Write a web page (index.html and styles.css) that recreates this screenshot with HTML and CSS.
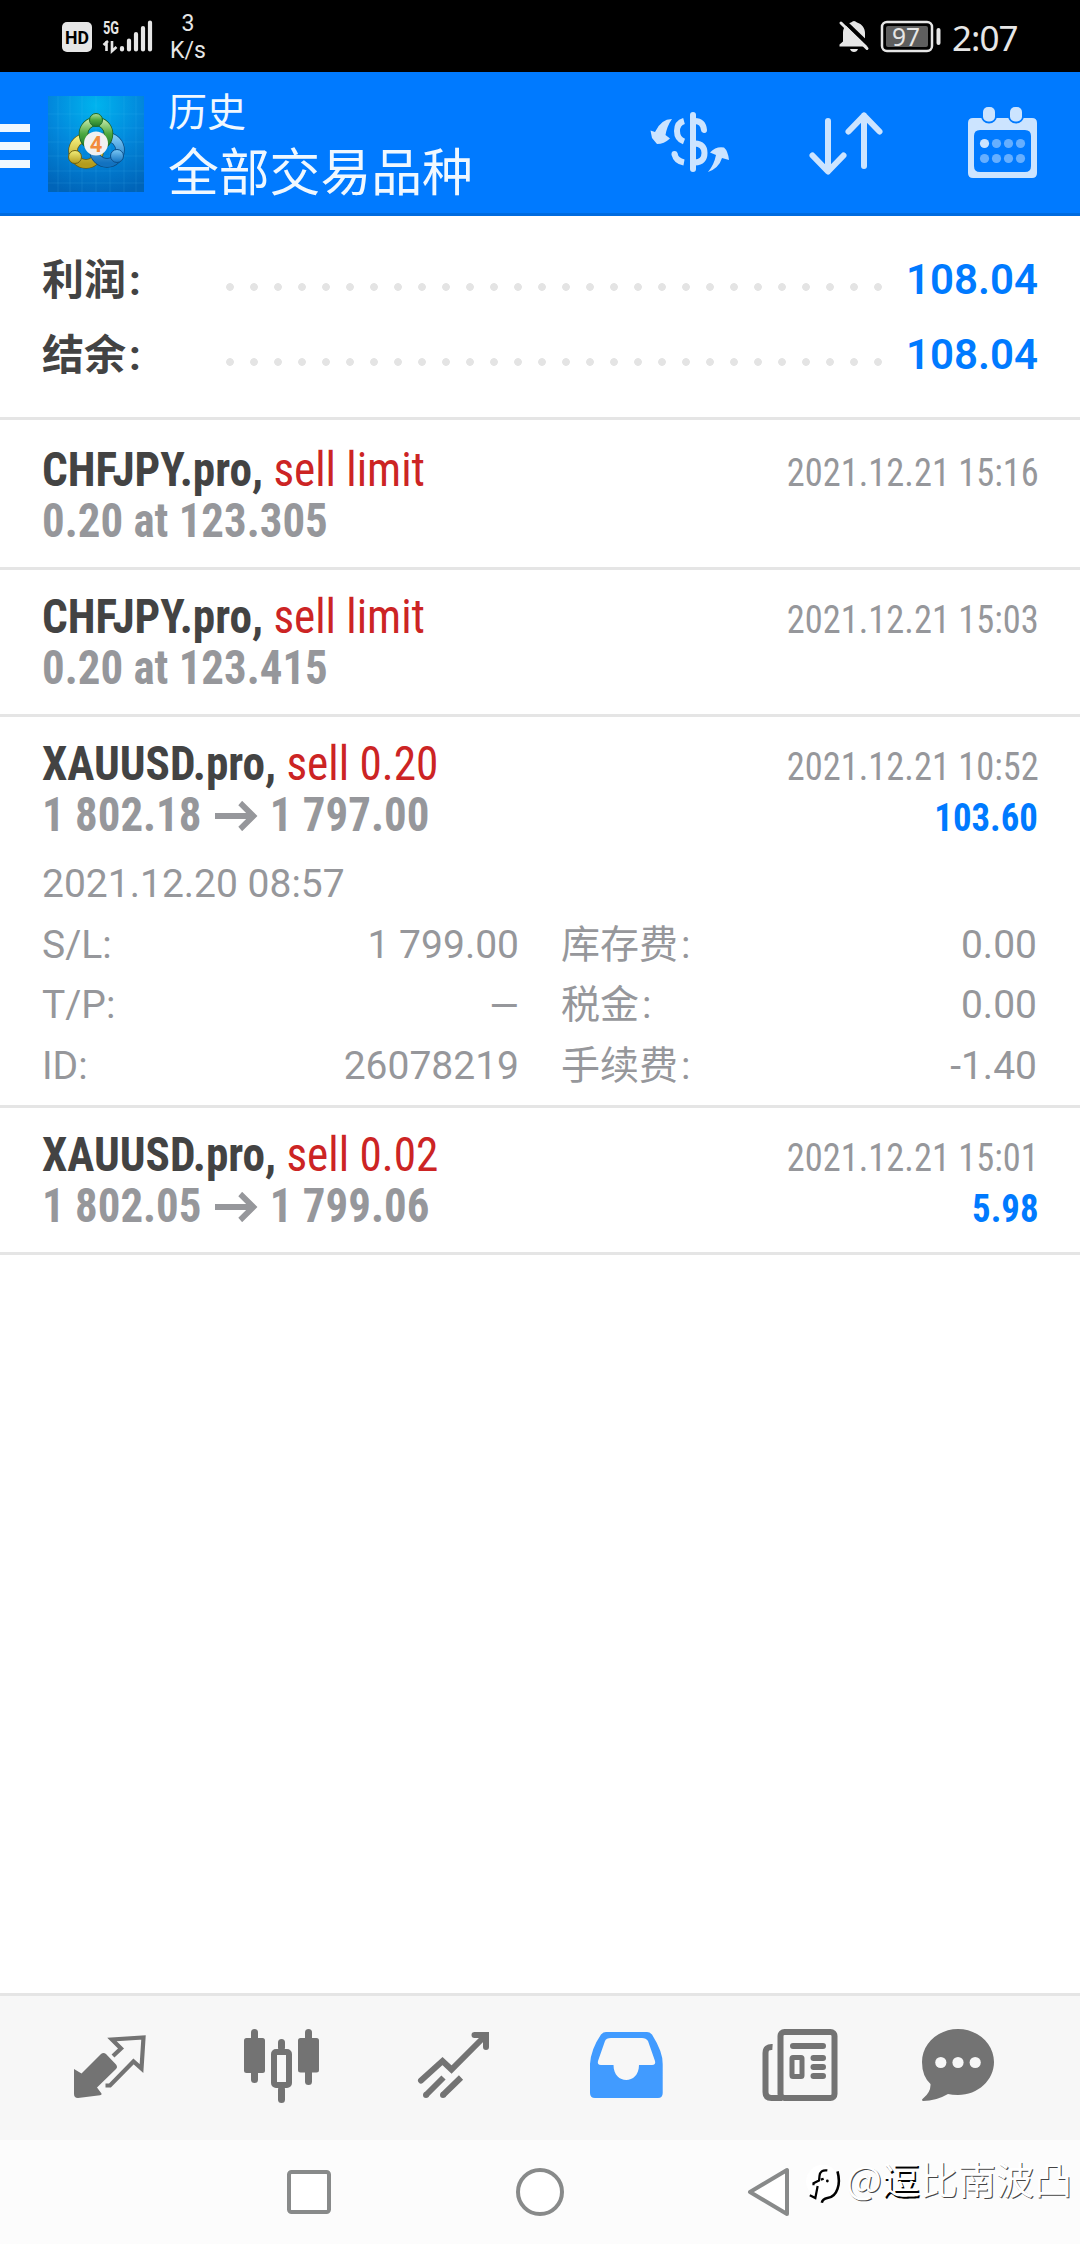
FILE: index.html
```
<!DOCTYPE html>
<html lang="zh-CN">
<head>
<meta charset="utf-8">
<title>历史</title>
<link rel="stylesheet" href="styles.css">
</head>
<body>
<div class="screen">
  <div class="status">
    <svg class="status-left" viewBox="0 0 160 72">
      <rect x="62" y="22" width="30" height="30" rx="5" fill="#e6e6e6"/>
      <text x="65" y="44" class="hd" textLength="24" lengthAdjust="spacingAndGlyphs">HD</text>
      <text x="103" y="34" class="g5" textLength="16" lengthAdjust="spacingAndGlyphs">5G</text>
      <path d="M106.500 41V51M103.500 45L108 41M112 41V51L116.500 47" fill="none" stroke="#e6e6e6" stroke-width="2.600"/>
      <path d="M122 48V49.500M129 40.500V49.500M136 34V49.500M143 28V49.500M150 22.500V49.500" stroke="#e6e6e6" stroke-width="4.200" stroke-linecap="round"/>
    </svg>
    <div class="speed"><span>3</span><span>K/s</span></div>
    <svg class="status-right" viewBox="830 0 115 72">
      <path d="M839.500 46.500V44.500L843 41.500V33C843 27 847 23.500 851 22.500Q854 19.500 857 22.500C862 24 865 28 865 33V41.500L868 46.500ZM850 49H858Q857 52 854 52T850 49Z" fill="#e6e6e6"/>
      <path d="M843 20L871 47" stroke="#000" stroke-width="4"/>
      <path d="M841 23L867 48.500" stroke="#e6e6e6" stroke-width="3" stroke-linecap="round"/>
      <rect x="882" y="22" width="50" height="29" rx="5" fill="none" stroke="#e6e6e6" stroke-width="2.500"/>
      <rect x="886" y="26" width="42" height="21" rx="2" fill="#5e5e5e"/>
      <rect x="936.500" y="28" width="4" height="17" rx="2" fill="#e6e6e6"/>
      <text x="892" y="46" class="pct" textLength="28" lengthAdjust="spacingAndGlyphs">97</text>
    </svg>
    <div class="clock">2:07</div>
  </div>

  <div class="appbar">
    <div class="burger"><i></i><i></i><i></i></div>
    <svg class="logo" viewBox="0 0 96 96">
      <defs>
        <radialGradient id="sky" cx=".5" cy=".1" r=".95"><stop offset="0" stop-color="#00b4ee"/><stop offset=".5" stop-color="#0288dc"/><stop offset="1" stop-color="#0064b8"/></radialGradient>
        <linearGradient id="gr" x2="0" y2="1"><stop offset="0" stop-color="#b5e09a"/><stop offset=".5" stop-color="#4ca83f"/><stop offset="1" stop-color="#1f7a2c"/></linearGradient>
        <linearGradient id="ye" x2="0" y2="1"><stop offset="0" stop-color="#f3ee7a"/><stop offset="1" stop-color="#b39b1c"/></linearGradient>
        <linearGradient id="bl" x2="0" y2="1"><stop offset="0" stop-color="#7cc8f5"/><stop offset="1" stop-color="#1272c0"/></linearGradient>
      </defs>
      <rect width="96" height="96" fill="url(#sky)"/>
      <path d="M0 18H96M0 32H96M0 46H96M0 60H96M0 75H96M0 87H96M10 0V96M22 0V96M34 0V96M48 0V96M62 0V96M76 0V96M88 0V96" stroke="#5cc8ff" stroke-opacity=".13" fill="none"/>
      <circle cx="38" cy="55" r="13" fill="none" stroke="#655c12" stroke-width="9.500"/>
      <circle cx="38" cy="55" r="13" fill="none" stroke="url(#ye)" stroke-width="8"/>
      <circle cx="59" cy="54" r="13" fill="none" stroke="#0a4a80" stroke-width="9.500"/>
      <circle cx="59" cy="54" r="13" fill="none" stroke="url(#bl)" stroke-width="8"/>
      <circle cx="48" cy="38" r="12.500" fill="none" stroke="#185f24" stroke-width="9.500"/>
      <circle cx="48" cy="38" r="12.500" fill="none" stroke="url(#gr)" stroke-width="8"/>
      <circle cx="48" cy="24" r="6.500" fill="url(#gr)" stroke="#1d6b28"/>
      <circle cx="27" cy="61" r="6.500" fill="url(#ye)" stroke="#6b6010"/>
      <circle cx="69" cy="60" r="6.500" fill="url(#bl)" stroke="#0b4f8c"/>
      <circle cx="48" cy="47.500" r="12" fill="#f1f1f1"/>
      <text x="48" y="55.500" class="four">4</text>
    </svg>
    <div class="titles"><div class="t1">历史</div><div class="t2">全部交易品种</div></div>
    <svg class="tools" viewBox="630 72 420 144">
      <g fill="#cce4ff">
        <path d="M672 119Q661 119 655 132L650.500 130.500L652 138L657 144Q664 144 670 138.500L665.500 135Q667 126 672 119ZM708 172Q719 168 722 158L729 160Q728 151 724 147.500Q716 146 710 152.500L716 155Q714 165 708 172Z"/>
        <rect x="690" y="112" width="6" height="60" rx="3"/>
      </g>
      <g fill="none" stroke="#cce4ff" stroke-width="6">
        <path d="M684 121Q677 123 677 131T684 141.500M674.500 154Q676 161 684 162.500"/>
        <path d="M695 121Q703 121 704 130" stroke-linecap="round"/>
        <path d="M674.500 154V154.100" stroke-linecap="round"/>
        <path d="M695 143.500Q704.500 144 704.500 153T695 162.500"/>
        <path d="M828 121V170M812.500 155.500L828 171.500L843.500 155.500M864 166V115.500M848.500 131.500L864 115.500L879.500 131.500" stroke-linecap="round" stroke-linejoin="round"/>
      </g>
      <path fill="#cce4ff" fill-rule="evenodd" d="M973 118H1032Q1037 118 1037 123V173Q1037 178 1032 178H973Q968 178 968 173V123Q968 118 973 118ZM980 130Q974 130 974 136V166Q974 172 980 172H1025Q1031 172 1031 166V136Q1031 130 1025 130Z"/>
      <path d="M989 113V115.500M1016 113V115.500" stroke="#007aff" stroke-width="16" stroke-linecap="round"/>
      <rect x="983" y="107" width="12" height="14.500" rx="5" fill="#cce4ff"/><rect x="1010" y="107" width="12" height="14.500" rx="5" fill="#cce4ff"/>
      <g fill="#66afff"><circle cx="984.500" cy="143.500" r="4.600" fill="#cce4ff"/><circle cx="996.500" cy="143.500" r="4.600"/><circle cx="1008.500" cy="143.500" r="4.600"/><circle cx="1020.500" cy="143.500" r="4.600"/><circle cx="984.500" cy="158.500" r="4.600"/><circle cx="996.500" cy="158.500" r="4.600"/><circle cx="1008.500" cy="158.500" r="4.600"/><circle cx="1020.500" cy="158.500" r="4.600"/></g>
    </svg>
  </div>

  <div class="summary">
    <div class="sum"><b>利润<span class="colon">:</span></b><i class="dots"></i><em>108.04</em></div>
    <div class="sum"><b>结余<span class="colon">:</span></b><i class="dots"></i><em>108.04</em></div>
  </div>

  <div class="list">
    <div class="deal">
      <div class="line"><div class="cond"><b>CHFJPY.pro, </b><span class="sell">sell limit</span></div><div class="cond date">2021.12.21 15:16</div></div>
      <div class="line"><div class="cond price">0.20 at 123.305</div></div>
    </div>
    <div class="deal">
      <div class="line"><div class="cond"><b>CHFJPY.pro, </b><span class="sell">sell limit</span></div><div class="cond date">2021.12.21 15:03</div></div>
      <div class="line"><div class="cond price">0.20 at 123.415</div></div>
    </div>
    <div class="deal">
      <div class="line"><div class="cond"><b>XAUUSD.pro, </b><span class="sell">sell 0.20</span></div><div class="cond date">2021.12.21 10:52</div></div>
      <div class="line"><div class="cond price">1 802.18 <svg class="arrow" viewBox="0 0 46 30"><path d="M0 15H41M27 2L41 15L27 28" fill="none" stroke="#96979b" stroke-width="6"/></svg> 1 797.00</div><div class="cond profit">103.60</div></div>
      <div class="details">
        <div class="wide">2021.12.20 08:57</div>
        <div class="kv"><span>S/L:</span><span>1 799.00</span></div><div class="kv"><span>库存费<span class="colon">:</span></span><span>0.00</span></div>
        <div class="kv"><span>T/P:</span><span class="dash">—</span></div><div class="kv"><span>税金<span class="colon">:</span></span><span>0.00</span></div>
        <div class="kv"><span>ID:</span><span>26078219</span></div><div class="kv"><span>手续费<span class="colon">:</span></span><span>-1.40</span></div>
      </div>
    </div>
    <div class="deal">
      <div class="line"><div class="cond"><b>XAUUSD.pro, </b><span class="sell">sell 0.02</span></div><div class="cond date">2021.12.21 15:01</div></div>
      <div class="line"><div class="cond price">1 802.05 <svg class="arrow" viewBox="0 0 46 30"><path d="M0 15H41M27 2L41 15L27 28" fill="none" stroke="#96979b" stroke-width="6"/></svg> 1 799.06</div><div class="cond profit">5.98</div></div>
    </div>
  </div>

  <div class="tabs">
    <svg viewBox="0 1996 180 144"><path fill="#737373" d="M74 2069L81.500 2073.500L101 2054Q103.500 2052 106 2054L116 2064.500Q118 2067 116 2069L97 2087.500L101.500 2093.500Q102 2095 100 2095.300L78 2098Q74 2098 74 2094Z"/><path fill="none" stroke="#737373" stroke-width="4.200" d="M113 2056L121 2048.500L112 2039.500L143.500 2037.500L141.500 2068.500L133.500 2061.500L110 2085.500H105.500"/></svg>
    <svg viewBox="180 1996 180 144"><g fill="#737373"><rect x="244" y="2038" width="21" height="35" rx="2.500"/><rect x="251" y="2029" width="7" height="54" rx="3.500"/><rect x="298" y="2038" width="21" height="34.500" rx="2.500"/><rect x="305" y="2029" width="7" height="56" rx="3.500"/><rect x="278" y="2039" width="7" height="12" rx="3.500"/><rect x="278" y="2086" width="7" height="17" rx="3.500"/></g><rect x="274" y="2052" width="15" height="33" rx="2" fill="none" stroke="#737373" stroke-width="6"/></svg>
    <svg viewBox="360 1996 180 144"><g fill="none" stroke="#737373" stroke-width="6"><path d="M421 2080.500L442.500 2061L451.500 2069.500L484 2037M474.500 2035H486V2047" stroke-linecap="round"/><path d="M443.500 2077.500L426 2095M461 2077.500L443 2095"/></g><g fill="#737373"><circle cx="426" cy="2095" r="3"/><circle cx="443" cy="2095" r="3"/></g></svg>
    <svg viewBox="540 1996 180 144"><path fill="#419bff" fill-rule="evenodd" d="M606 2032H647Q650 2032 652 2034.500Q663 2052 662.700 2064V2093Q662.700 2098 658 2098H595Q590 2098 590 2093V2064Q591 2049 601 2034.500Q603 2032 606 2032ZM611 2038Q606 2038 605 2041L598 2061Q597 2065 601 2065H613.500C613.500 2085 639 2085 639 2065H652Q656 2065 655 2061L648 2041Q646 2038 642 2038Z"/></svg>
    <svg viewBox="720 1996 180 144"><g fill="none" stroke="#737373" stroke-width="6"><rect x="780.500" y="2032" width="54" height="66" rx="4"/><path d="M772.500 2047Q765.500 2046.500 765.500 2053V2092Q765.500 2098 771.500 2098H782"/><path d="M793 2046H823M813.500 2058H823M813.500 2067H823M813.500 2076H823" stroke-linecap="round"/></g><rect x="792" y="2057.500" width="10" height="19" rx="1" fill="none" stroke="#737373" stroke-width="5"/></svg>
    <svg viewBox="900 1996 180 144"><path fill="#737373" d="M958 2029C978 2029 994 2044 994 2062S978 2095 958 2095Q952 2095 948 2094Q936 2101 923 2101Q921 2100 923 2098.500Q931 2092 930.500 2084Q922 2076 922 2062C922 2044 938 2029 958 2029Z"/><g fill="#f7f7f7"><circle cx="940.800" cy="2062.500" r="5.600"/><circle cx="958" cy="2062.500" r="5.600"/><circle cx="975.200" cy="2062.500" r="5.600"/></g></svg>
  </div>

  <div class="nav">
    <svg viewBox="0 2140 1080 104"><g fill="#fff" stroke="#888a8a" stroke-width="4"><rect x="289" y="2172" width="40" height="40" rx="2.500"/><circle cx="540" cy="2192" r="22"/><path d="M785 2170V2214L748 2192Z" stroke-linejoin="round" transform="translate(2 0)"/></g></svg>
  </div>

  <div class="mark">
    <svg viewBox="0 0 44 52"><circle cx="19" cy="20" r="18" fill="#fff"/><path d="M24 8Q16 7 15.500 14L15 19L9 22L9 24M20 17L17 18M13.500 25L11 38L5 35" fill="none" stroke="#000" stroke-width="2.400"/><path d="M35 9Q38 20 35 28Q32 37 24 38Q19 39 18 43" fill="none" stroke="#000" stroke-width="2.800"/><circle cx="24" cy="19.500" r="1.500"/></svg>
    <span>@<span class="heavy">逗</span>比南波凸</span>
  </div>
</div>
</body>
</html>
```
FILE: styles.css
```
* { box-sizing: border-box; }
body { margin: 0; background: #fff; }
i, em { font-style: normal; }
.screen {
  position: relative;
  display: flex;
  flex-direction: column;
  width: 1080px;
  height: 2244px;
  overflow: hidden;
  font-family: Roboto, "Noto Sans CJK SC", sans-serif;
}

.status { display: flex; height: 72px; background: #000; color: #e6e6e6; flex: none; }
.status-left { width: 160px; height: 72px; }
.hd { font: 700 18.500px Roboto, sans-serif; fill: #000; }
.g5 { font: 700 18px Roboto, sans-serif; fill: #e6e6e6; }
.pct { font: 400 25px "Noto Sans", sans-serif; fill: #e6e6e6; }
.speed {
  display: flex;
  flex-direction: column;
  align-items: center;
  width: 56px;
  padding-top: 10px;
  font-size: 23px;
  line-height: 27px;
}
.status-right { width: 115px; height: 72px; margin-left: 614px; }
.clock { padding: 16px 0 0 7px; font: 400 35px/43px "Noto Sans", sans-serif; letter-spacing: -1px; }

.appbar {
  display: flex;
  height: 144px;
  flex: none;
  background: #007aff;
  border-bottom: 3px solid #006bdf;
  color: #f0f8ff;
}
.burger { display: flex; flex-direction: column; gap: 10px; width: 30px; padding-top: 52px; }
.burger i { height: 8px; background: #f0f8ff; }
.logo { width: 96px; height: 96px; margin: 24px 0 0 18px; }
.four { font: 700 22px Roboto, sans-serif; fill: #f28b3c; text-anchor: middle; }
.titles { width: 460px; padding: 13px 0 0 24px; }
.t1 { font-size: 39px; line-height: 56px; }
.t2 { font-size: 50.800px; line-height: 66px; white-space: nowrap; }
.tools { width: 420px; height: 144px; margin-left: 26px; }

.summary { height: 204px; flex: none; padding: 26px 42px 0; border-bottom: 3px solid #e5e5e5; }
.sum { display: flex; height: 75px; align-items: center; justify-content: space-between; font-size: 42px; line-height: 75px; }
.sum b { width: 184px; padding-top: 1px; color: #434343; }
.sum em { width: 154px; text-align: right; color: #007aff; font-weight: 600; }
.sum .colon { margin-left: 3px; }
.dots {
  flex: 1;
  height: 8px;
  margin-top: 14px;
  background: radial-gradient(circle at 4px 4px, #e4e4e4 3.500px, transparent 4.200px) 0 0 / 24px 8px;
}

.list { padding-top: 3px; }
.deal { padding: 21px 42px 17px; border-bottom: 3px solid #e5e5e5; }
.line { display: flex; justify-content: space-between; height: 51px; }
.line + .line { height: 55px; }
.cond {
  font-family: "Roboto Condensed", Roboto, sans-serif;
  font-stretch: 75%;
  font-size: 48px;
  line-height: 51px;
  color: #434343;
  white-space: pre;
  transform: scaleX(.942);
  transform-origin: 0 0;
}
.sell { color: #cc2424; }
.price { color: #96979b; font-weight: 700; transform: scaleX(.935); }
.date, .profit { font-size: 39px; line-height: 58px; transform-origin: 100% 0; }
.date { color: #96979b; transform: translateX(1px) scaleX(.934); }
.profit { color: #007aff; font-weight: 700; }
.arrow { width: 46px; height: 30px; margin: 0 2px 0 3px; }
.details {
  display: grid;
  grid-template-columns: 477px 476px;
  column-gap: 42px;
  grid-template-rows: repeat(4, 60.700px);
  height: 244px;
  margin: 10px 0 -10px;
  font-size: 39px;
  line-height: 61px;
  color: #96979b;
}
.wide { grid-column: 1 / 3; }
.kv { display: flex; justify-content: space-between; }
.kv .colon { margin-left: 3px; }
.dash { padding-top: 1px; font-size: 38px; }

.tabs { display: grid; grid-template-columns: repeat(6, 180px); height: 147px; margin-top: auto; flex: none; background: #f7f7f7; border-top: 3px solid #e5e5e5; }
.tabs svg { width: 180px; height: 144px; }
.nav { height: 104px; flex: none; background: #fcfcfc; }
.nav svg { display: block; width: 1080px; height: 104px; }
.mark {
  position: absolute;
  left: 805px;
  top: 2163px;
  display: flex;
  font: 400 38px/30px "Noto Sans CJK SC", sans-serif;
  color: #fff;
  text-shadow: 1px 1px 0 #444;
}
.mark .heavy { text-shadow: 1.500px 1.500px 0 #000; }
.mark svg { width: 41px; height: 48px; }
```
